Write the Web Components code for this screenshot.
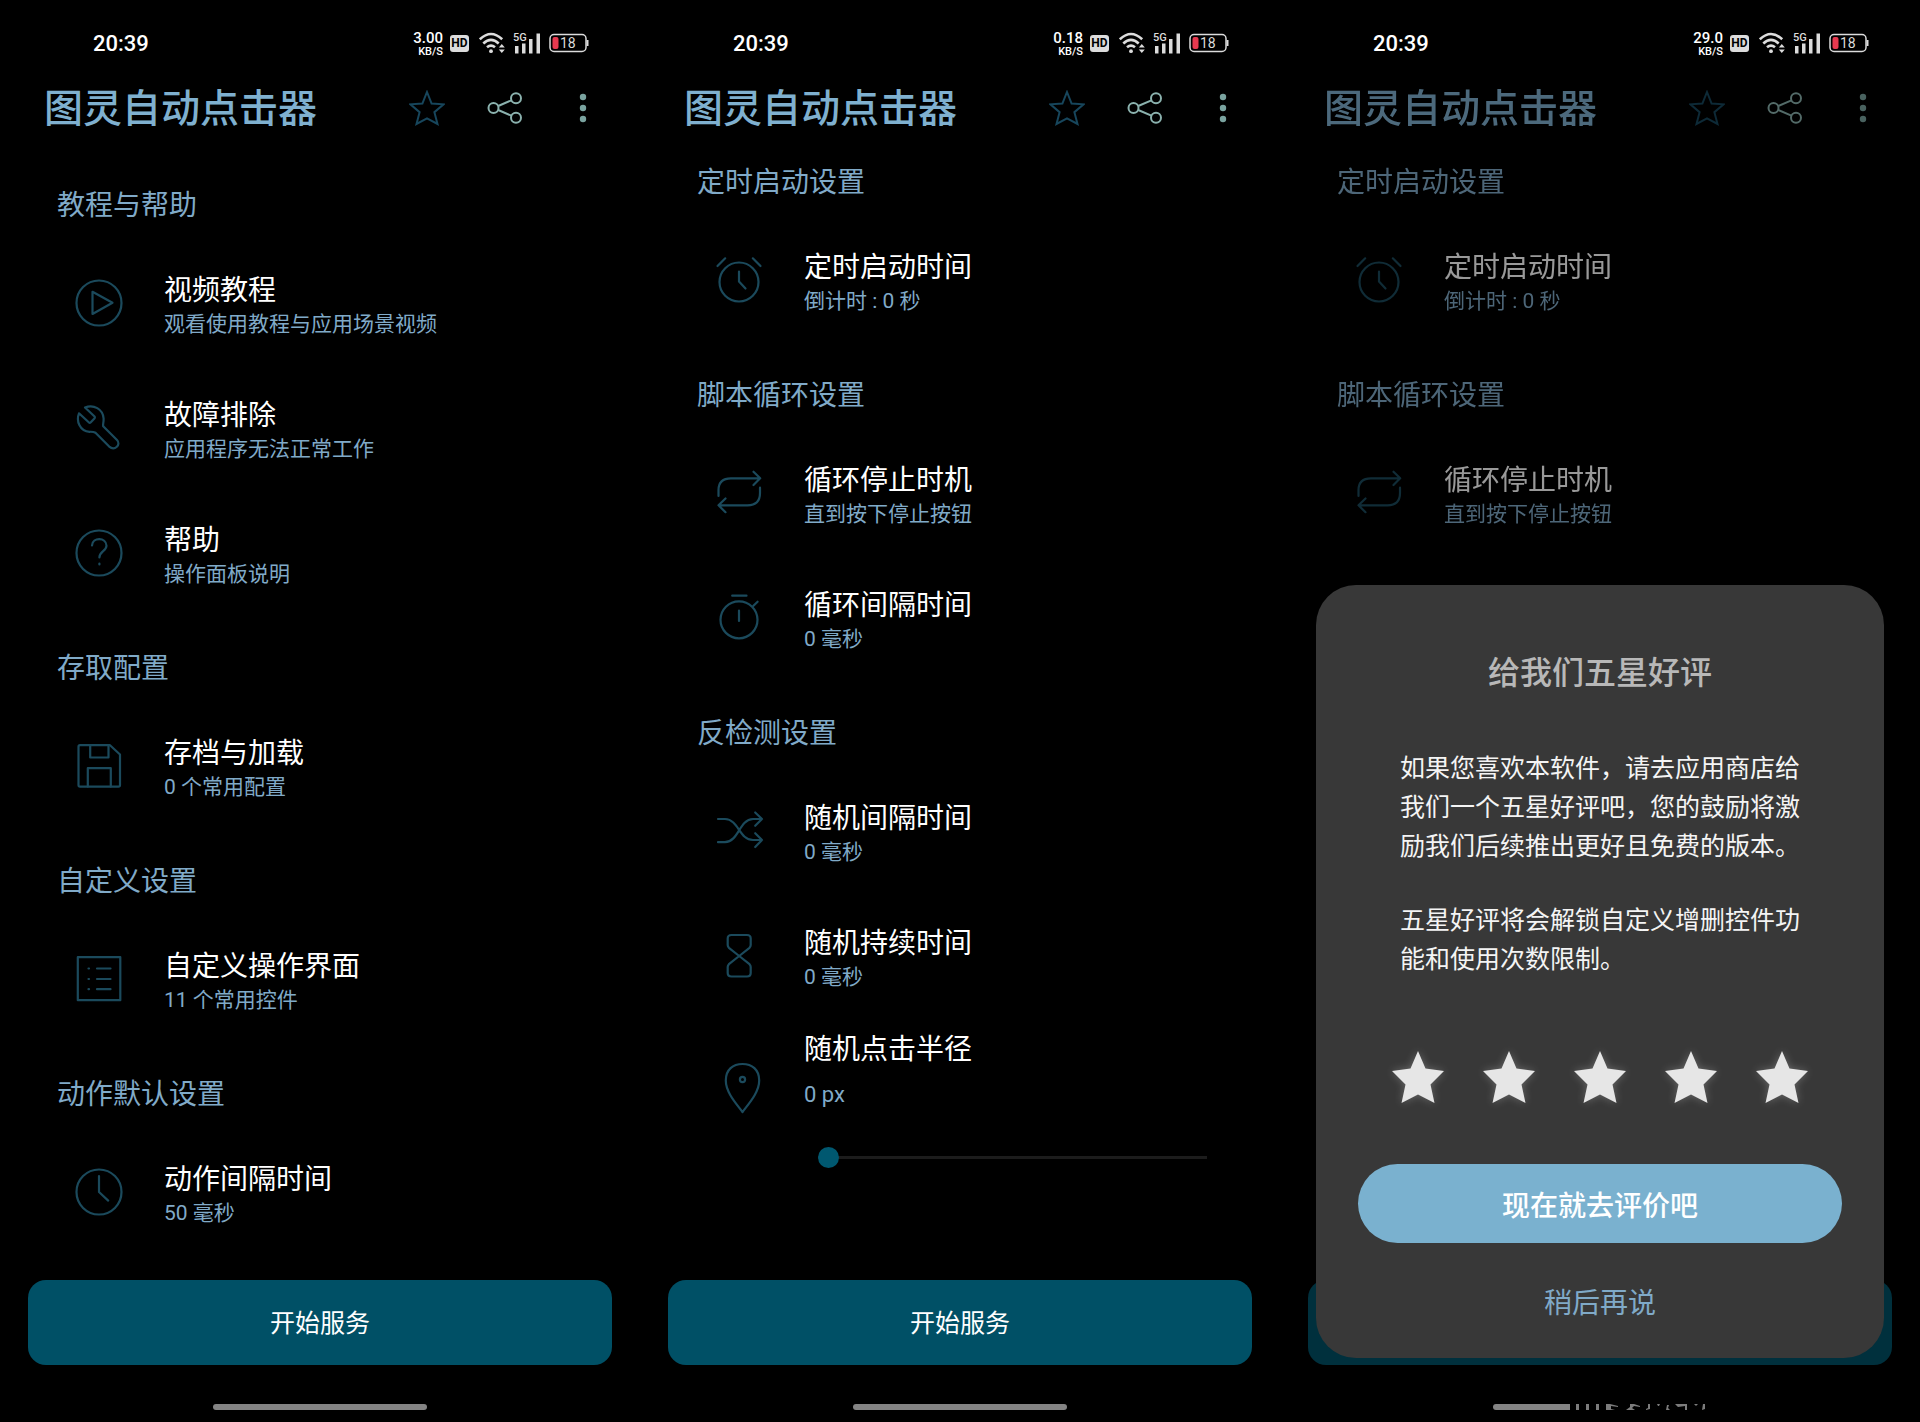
<!DOCTYPE html>
<html lang="zh-CN">
<head>
<meta charset="utf-8">
<meta name="viewport" content="width=device-width, initial-scale=1">
<title>图灵自动点击器</title>
<style>
  html { background: #000; }
  body {
    margin: 0;
    min-height: 100vh;
    display: flex;
    background: #000;
    font-family: Roboto, "Noto Sans CJK SC", sans-serif;
    color: #fff;
    --accent: #80aac8;
    --line: #1b4a5c;
    --primary: #005066;
  }
</style>
</head>
<body>
<phone-screen speed="3.00">
  <setting-group heading="教程与帮助">
    <setting-item icon="play" label="视频教程">观看使用教程与应用场景视频</setting-item>
    <setting-item icon="wrench" label="故障排除">应用程序无法正常工作</setting-item>
    <setting-item icon="help" label="帮助">操作面板说明</setting-item>
  </setting-group>
  <setting-group heading="存取配置">
    <setting-item icon="save" label="存档与加载">0 个常用配置</setting-item>
  </setting-group>
  <setting-group heading="自定义设置">
    <setting-item icon="list" label="自定义操作界面">11 个常用控件</setting-item>
  </setting-group>
  <setting-group heading="动作默认设置">
    <setting-item icon="clock" label="动作间隔时间">50 毫秒</setting-item>
  </setting-group>
</phone-screen>

<phone-screen speed="0.18" scrolled>
  <setting-group heading="定时启动设置">
    <setting-item icon="alarm" label="定时启动时间">倒计时 : 0 秒</setting-item>
  </setting-group>
  <setting-group heading="脚本循环设置">
    <setting-item icon="repeat" label="循环停止时机">直到按下停止按钮</setting-item>
    <setting-item icon="stopwatch" label="循环间隔时间">0 毫秒</setting-item>
  </setting-group>
  <setting-group heading="反检测设置">
    <setting-item icon="shuffle" label="随机间隔时间">0 毫秒</setting-item>
    <setting-item icon="hourglass" label="随机持续时间">0 毫秒</setting-item>
    <slider-item label="随机点击半径">0 px</slider-item>
  </setting-group>
</phone-screen>

<phone-screen speed="29.0" scrolled dimmed>
  <setting-group heading="定时启动设置">
    <setting-item icon="alarm" label="定时启动时间">倒计时 : 0 秒</setting-item>
  </setting-group>
  <setting-group heading="脚本循环设置">
    <setting-item icon="repeat" label="循环停止时机">直到按下停止按钮</setting-item>
  </setting-group>
  <rating-dialog slot="dialog" heading="给我们五星好评">
    <p>如果您喜欢本软件，请去应用商店给我们一个五星好评吧，您的鼓励将激励我们后续推出更好且免费的版本。</p>
    <p>五星好评将会解锁自定义增删控件功能和使用次数限制。</p>
  </rating-dialog>
</phone-screen>

<script>
const ICONS = {
  play: '<circle cx="24" cy="24" r="22.5"/><path d="M17.5 12.8V35L37.5 23.8Z"/>',
  wrench: '<path d="M10 3.5L19.3 12.3Q20.4 13.3 19.4 14.4L15.8 18.3Q14.8 19.3 13.7 18.3L4 9.3C.8 17 5 27.3 14.5 27.8Q18.5 27.6 20.5 28.8L34.2 42.6C39.8 47.2 46.4 40.6 42 36L28.2 22.3C27.6 20.5 28.8 18.5 28.6 14.5C28 5 18.5 0 10 3.5Z"/>',
  help: '<circle cx="24" cy="24" r="22.5"/><path d="M17 16.5C17.5 8 31.2 8 31.5 16.7C31.5 22 24.4 22.5 24.4 28.5M24.4 34.5v1"/>',
  save: '<path d="M5 3.2H35L45 12.5V43Q45 44.6 43.4 44.6H5Q3.5 44.6 3.5 43V4.8Q3.5 3.2 5 3.2Z"/><path d="M15.2 3.2V15.5H33.5V3.2M12.8 44.6V26.2H35.8V44.6"/>',
  list: '<rect x="2.8" y="2.2" width="42.5" height="43"/><path d="M22 13.5H35.5M22 24H35.5M22 34.2H35.5M13.500 13.5h.5M13.500 24h.5M13.500 34.2h.5"/>',
  clock: '<circle cx="24" cy="24" r="22.5"/><path d="M24 8V24L33.2 32.6"/>',
  alarm: '<circle cx="24" cy="26" r="19.5"/><path d="M2.5 10L10.2 2.3M37.8 2.3L45.5 10M24 15.5V25.5L30.5 32.5"/>',
  repeat: '<path d="M3.5 27V21Q3.5 9.3 16 9.3H45M38.5 2.7L45.2 9.3L38.5 16M45 18.7V24Q45 36.3 32.5 36.3H3.5M10.5 29.5L3.5 36.3L10.5 43.2"/>',
  stopwatch: '<circle cx="24" cy="25.8" r="18.5"/><path d="M17.2 1.7H31.5M38.2 12L42.6 7.7M24 16.5V27"/>',
  shuffle: '<path d="M3 12H10C24 12.5 24 33 38 33H47M3 35.2H10C24 34.5 24 12.5 38 12H47M40.2 5.5L47 12L40.2 18.8M40.2 26.2L47 33L40.2 40"/>',
  hourglass: '<path d="M16.5 3H32Q35.7 3 35.7 6.5V13Q35.7 14.5 34.5 15.8L24.2 24L13.9 32.2Q12.7 33.5 12.7 35V41Q12.7 44.5 16.5 44.5H32Q35.7 44.5 35.7 41V35Q35.7 33.5 34.5 32.2L24.2 24L13.9 15.8Q12.7 14.5 12.7 13V6.5Q12.7 3 16.5 3Z"/>',
  pin: '<path d="M27.5 48C22.5 41 10.8 29 10.8 16.5C10.8 5.5 18 0 27.5 0S44.2 5.5 44.2 16.5C44.2 29 32.5 41 27.5 48Z"/><circle cx="27.5" cy="15.5" r="2.6"/>'
};

class BaseElement extends HTMLElement {
  connectedCallback() {
    if (this.shadowRoot) return;
    this.attachShadow({ mode: 'open' }).innerHTML = this.render();
  }
}

customElements.define('line-icon', class extends BaseElement {
  render() {
    return `<style>
      :host { display: block; width: 48px; height: 48px; flex: none; color: var(--line); }
      svg { display: block; overflow: visible; fill: none; stroke: currentColor; stroke-width: 2.2; stroke-linecap: round; stroke-linejoin: round; }
    </style>
    <svg width="48" height="48" viewBox="0 0 48 48" aria-hidden="true">${ICONS[this.getAttribute('name')]}</svg>`;
  }
});

customElements.define('setting-group', class extends BaseElement {
  render() {
    return `<style>
      :host { display: block; }
      h2 { margin: 0; padding: 33px 57px 15px; font-size: 28px; line-height: 40px; font-weight: 400; color: var(--accent); }
    </style>
    <section><h2>${this.getAttribute('heading')}</h2><slot></slot></section>`;
  }
});

customElements.define('setting-item', class extends BaseElement {
  render() {
    return `<style>
      :host { display: flex; align-items: center; gap: 41px; box-sizing: border-box; min-height: 125px; padding: 0 75px 2px; }
      .text { display: flex; flex-direction: column; padding-top: 6px; }
      .label { font-size: 28px; line-height: 36px; }
      .note { font-size: 21px; line-height: 30px; color: var(--accent); }
    </style>
    <line-icon name="${this.getAttribute('icon')}"></line-icon>
    <div class="text">
      <span class="label">${this.getAttribute('label')}</span>
      <span class="note"><slot></slot></span>
    </div>`;
  }
});

customElements.define('slider-item', class extends BaseElement {
  render() {
    return `<style>
      :host { display: flex; gap: 41px; padding: 13px 73px 0 75px; }
      line-icon { padding-top: 32px; }
      .text { flex: 1; display: flex; flex-direction: column; }
      label { font-size: 28px; line-height: 36px; }
      output { padding-top: 11px; font-size: 22px; line-height: 32px; color: var(--accent); }
      input { appearance: none; -webkit-appearance: none; display: block; margin: 36px 0 0 14px; height: 21px; background: none; }
      input::-webkit-slider-runnable-track { height: 3px; background: #1c1c1c; }
      input::-webkit-slider-thumb { -webkit-appearance: none; width: 21px; height: 21px; margin-top: -9px; border-radius: 50%; background: #005870; }
    </style>
    <line-icon name="pin"></line-icon>
    <div class="text">
      <label for="radius">${this.getAttribute('label')}</label>
      <output for="radius"><slot></slot></output>
      <input id="radius" type="range" min="0" max="100" value="0">
    </div>`;
  }
});

customElements.define('status-bar', class extends BaseElement {
  render() {
    return `<style>
      :host { display: flex; align-items: center; justify-content: space-between; height: 86px; padding: 0 51px 0 93px; font-family: Roboto, sans-serif; }
      time { padding-top: 2px; font-size: 22px; line-height: 28px; font-weight: 500; }
      .right { display: flex; align-items: center; }
      .speed { display: flex; flex-direction: column; align-items: flex-end; font-weight: 500; margin-right: 7px; padding-top: 2px; }
      .speed b { font-size: 15px; line-height: 15px; font-weight: 500; }
      .speed span { font-size: 11px; line-height: 11px; }
      .hd { width: 19px; height: 17px; border-radius: 3px; background: #dcdcdc; color: #000; font-size: 12px; line-height: 17px; font-weight: 700; text-align: center; margin-right: 10px; }
      svg { display: block; }
      .wifi { margin-right: 8px; }
      .signal { margin-right: 9px; }
    </style>
    <time>20:39</time>
    <div class="right">
      <div class="speed"><b>${this.getAttribute('speed')}</b><span>KB/S</span></div>
      <span class="hd">HD</span>
      <svg class="wifi" width="26" height="22" viewBox="0 0 26 22" fill="none" stroke="#dcdcdc" stroke-width="2.6" aria-label="Wi-Fi">
        <path d="M.8 7.3Q12 -3.3 23.2 7.3M4.3 11.5Q12 4.3 19.7 11.5M8 15.3Q12 11.8 16 15.3"/>
        <circle cx="12" cy="19.2" r="1.9" fill="#dcdcdc" stroke="none"/>
        <path d="M19.8 15.5L22.8 12L25.8 15.5ZM19.8 17.5L22.8 21L25.8 17.5Z" fill="#dcdcdc" stroke="none"/>
      </svg>
      <svg class="signal" width="27" height="22" viewBox="0 0 27 22" fill="#dcdcdc" aria-label="5G">
        <text x="0" y="9" font-size="11" font-weight="500">5G</text>
        <path d="M2 14h3.5v7.5H2zM9 11.5h3.5v10H9zM16 7h3.5v14.5H16zM23.5 1.5H27v20h-3.5z"/>
      </svg>
      <svg width="40" height="20" viewBox="0 0 40 20" aria-label="18%">
        <rect x="1" y="1.5" width="36" height="17" rx="4" fill="none" stroke="#dcdcdc" stroke-width="1.5"/>
        <path d="M38.5 7v6" stroke="#dcdcdc" stroke-width="2"/>
        <rect x="3.5" y="4" width="6" height="12" rx="2" fill="#e6394f"/>
        <text x="11" y="15" font-size="14" fill="#dcdcdc">18</text>
      </svg>
    </div>`;
  }
});

customElements.define('app-header', class extends BaseElement {
  render() {
    return `<style>
      :host { display: flex; align-items: center; justify-content: space-between; height: 44px; padding: 0 39px 0 44px; }
      h1 { margin: 0; padding-top: 2px; font-size: 39px; line-height: 44px; font-weight: 500; color: #7fb0cf; white-space: nowrap; }
      nav { display: flex; gap: 34px; }
      button { width: 44px; height: 44px; padding: 0; border: 0; background: none; display: grid; place-items: center; }
      button:last-child { margin-left: 3px; width: 37px; }
      svg { display: block; fill: none; stroke-width: 2; }
      .dots { fill: #7aa39f; }
    </style>
    <h1>图灵自动点击器</h1>
    <nav>
      <button aria-label="收藏"><svg width="36" height="36" viewBox="0 0 36 36" stroke="#17465c"><path d="M18 2L22.6 13.5L34.6 14.3L25.4 22.2L28.5 34L18 28.3L7.5 34L10.6 22.2L1.4 14.3L13.4 13.5Z"/></svg></button>
      <button aria-label="分享"><svg width="36" height="36" viewBox="0 0 36 36" stroke="#8bb2ae"><circle cx="6.5" cy="18" r="5"/><circle cx="29" cy="8.3" r="5"/><circle cx="29" cy="27.7" r="5"/><path d="M11.2 16L24.4 10.3M11.2 20L24.4 25.7"/></svg></button>
      <button aria-label="更多"><svg class="dots" width="8" height="30" viewBox="0 0 8 30"><circle cx="4" cy="4" r="3.2"/><circle cx="4" cy="15" r="3.2"/><circle cx="4" cy="26" r="3.2"/></svg></button>
    </nav>`;
  }
});

customElements.define('home-bar', class extends BaseElement {
  render() {
    const cut = this.hasAttribute('cut');
    return `<style>
      :host { display: flex; justify-content: center; gap: 5px; padding: 39px 0 12px; }
      i { width: 33.333%; height: 6px; border-radius: 3px; background: #848484; }
      :host([cut]) i { width: 12%; border-radius: 3px 0 0 3px; }
    </style><i></i>${cut ? `<svg width="132" height="6" viewBox="0 0 132 6" fill="#7c7c7c" aria-hidden="true">
      <path d="M1 0h3v6H1zM11 0h3v6h-3zM21 0h3v6h-3zM31 0h4l8 2v1l-7-1v3l4 1h-9zM55 0h4l6 2v1l-6-1-2 2 3 2h-9l4-3zM73 0h2v5l-4 1v-1l2-1zM82 0h3l-1 2h-1zM92 1h2l-1 3 2 2h-4zM100 0h12v6h-2V2l-7 1zM119 0h4l-2 2zM128 0h2v5l-3 1z"/>
    </svg>` : ''}`;
  }
});

customElements.define('phone-screen', class extends BaseElement {
  render() {
    const dimmed = this.hasAttribute('dimmed');
    return `<style>
      :host { flex: 1 1 0; min-width: 0; display: flex; flex-direction: column; position: relative; }
      .app { flex: 1; display: flex; flex-direction: column; }
      :host([dimmed]) .app { opacity: .6; }
      main { flex: 1; padding-top: 23px; }
      :host([scrolled]) main { padding-top: 0; }
      .start { margin: 0 28px; padding: 3px 0 0; height: 85px; border: 0; border-radius: 18px; background: var(--primary); color: #fff; font: 400 25px/36px Roboto, "Noto Sans CJK SC", sans-serif; }
    </style>
    <status-bar speed="${this.getAttribute('speed')}"></status-bar>
    <div class="app">
      <app-header></app-header>
      <main><slot></slot></main>
      <button class="start" aria-label="开始服务">${dimmed ? '' : '开始服务'}</button>
    </div>
    <home-bar ${dimmed ? 'cut' : ''}></home-bar>
    <slot name="dialog"></slot>`;
  }
});

customElements.define('rating-dialog', class extends BaseElement {
  render() {
    const star = n => `<button class="star" aria-label="${n} 星"><svg width="52" height="52" viewBox="0 0 52 52"><path d="M26 0L33.5 17.5L52 20L38.5 33.5L42.5 52L26 43.5L9.5 52L13.5 33.5L0 20L18.5 17.5Z" fill="#e6e6e6"/></svg></button>`;
    return `<style>
      :host { position: absolute; left: 36px; right: 36px; bottom: 64px; }
      section { display: flex; flex-direction: column; box-sizing: border-box; padding: 68px 42px 34px; border-radius: 40px; background: #383838; }
      h2 { margin: 0 0 56px; font-size: 32px; line-height: 40px; font-weight: 500; color: #b8b8b8; text-align: center; }
      .body { display: flex; flex-direction: column; gap: 35px; padding: 0 42px; }
      ::slotted(p) { margin: 0; font-size: 25px; line-height: 39px; color: #f4f4f4; }
      .stars { display: flex; justify-content: space-between; padding: 0 34px; margin: 72px 0 61px; }
      button { border: 0; padding: 0; background: none; font-family: inherit; font-size: 28px; }
      .star svg { display: block; overflow: visible; filter: drop-shadow(0 0 4px #ffffff40); }
      .go { height: 79px; border-radius: 40px; background: #7ab1cf; color: #fff; font-weight: 500; margin-bottom: 41px; }
      .later { line-height: 40px; color: var(--accent); align-self: center; }
    </style>
    <section role="dialog" aria-labelledby="title">
      <h2 id="title">${this.getAttribute('heading')}</h2>
      <div class="body"><slot></slot></div>
      <div class="stars">${[1, 2, 3, 4, 5].map(star).join('')}</div>
      <button class="go">现在就去评价吧</button>
      <button class="later">稍后再说</button>
    </section>`;
  }
});
</script>
</body>
</html>
